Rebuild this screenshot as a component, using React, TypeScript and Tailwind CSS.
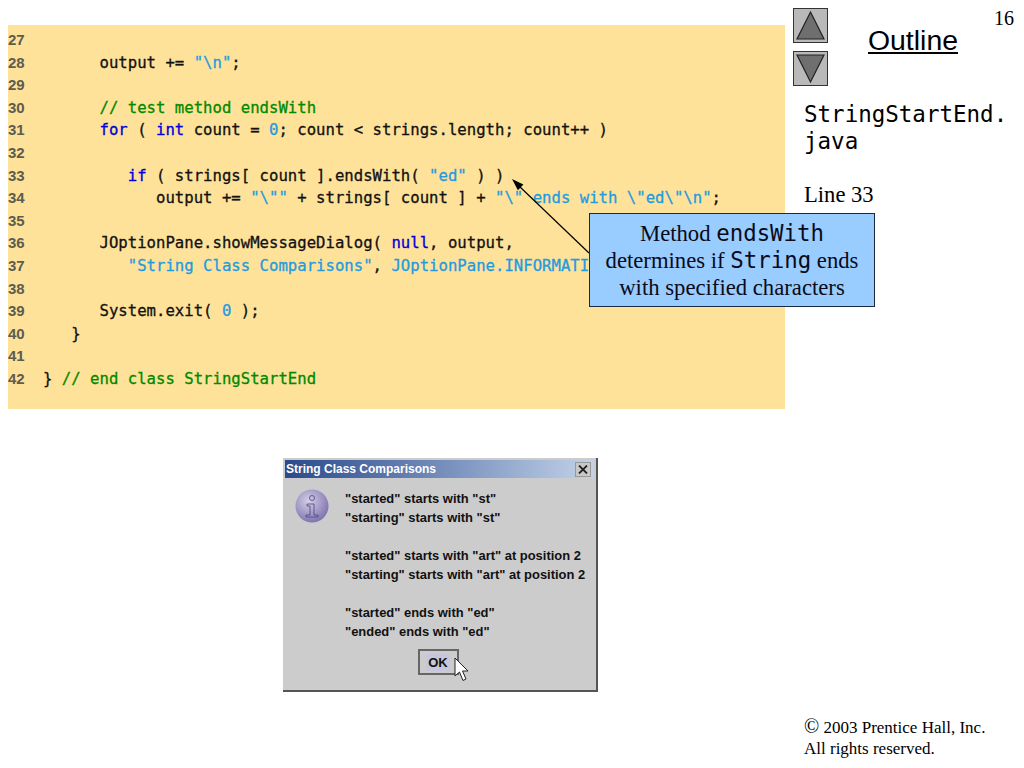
const sans = 'font-["Liberation_Sans",Arial,sans-serif]';

const Kw = ({ children }: { children: React.ReactNode }) => <span className="text-[#0000dd]">{children}</span>;
const Str = ({ children }: { children: React.ReactNode }) => <span className="text-[#1f9be0]">{children}</span>;
const Cm = ({ children }: { children: React.ReactNode }) => <span className="text-[#008a00]">{children}</span>;

const lines: [number, React.ReactNode][] = [
  [27, ''],
  [28, <>      output += <Str>"\n"</Str>;</>],
  [29, ''],
  [30, <>      <Cm>// test method endsWith</Cm></>],
  [31, <>      <Kw>for</Kw> ( <Kw>int</Kw> count = <Str>0</Str>; count &lt; strings.length; count++ )</>],
  [32, ''],
  [33, <>         <Kw>if</Kw> ( strings[ count ].endsWith( <Str>"ed"</Str> ) )</>],
  [34, <>            output += <Str>"\""</Str> + strings[ count ] + <Str>"\" ends with \"ed\"\n"</Str>;</>],
  [35, ''],
  [36, <>      JOptionPane.showMessageDialog( <Kw>null</Kw>, output,</>],
  [37, <>         <Str>"String Class Comparisons"</Str>, <Str>JOptionPane.INFORMATI</Str></>],
  [38, ''],
  [39, <>      System.exit( <Str>0</Str> );</>],
  [40, <>   {'}'}</>],
  [41, ''],
  [42, <>{'}'} <Cm>// end class StringStartEnd</Cm></>],
];

const message = [
  '"started" starts with "st"',
  '"starting" starts with "st"',
  '',
  '"started" starts with "art" at position 2',
  '"starting" starts with "art" at position 2',
  '',
  '"started" ends with "ed"',
  '"ended" ends with "ed"',
];

const NavButton = ({ up }: { up?: boolean }) => (
  <div className="w-[35px] h-[35px] bg-[#b9b9b9] border border-[#333] flex items-center justify-center">
    <svg width="29" height="31" viewBox="0 0 29 31">
      <polygon points={up ? '14.5,2 28,29 1,29' : '1,2 28,2 14.5,29'} fill="#6f6f6f" stroke="#222" strokeWidth="1.2" />
    </svg>
  </div>
);

export default function App() {
  return (
    <div className="relative w-[1024px] h-[768px] bg-white overflow-hidden flex">
      <div className="w-[793px] shrink-0 pl-2 pt-[25px] flex flex-col">
        <div className="w-[777px] h-[384px] bg-[#ffe299] pt-1 font-['DejaVu_Sans_Mono',monospace] text-[15.65px] text-[#111] [-webkit-text-stroke:0.3px]">
          {lines.map(([n, code]) => (
            <div key={n} className="flex h-[22.6px] leading-[22.6px]">
              <span className={`w-[35px] shrink-0 ${sans} font-bold text-[15px] text-[#5c5c50] [-webkit-text-stroke:0px]`}>{n}</span>
              <span className="whitespace-pre">{code}</span>
            </div>
          ))}
        </div>

        <div className="ml-[275px] mt-[49px] w-[315px] h-[234px] bg-[#cccccc] border-r-2 border-b-2 border-[#555] pt-0.5 flex flex-col">
          <div className={`h-[18px] mx-0.5 bg-gradient-to-r from-[#2b4a8c] to-[#c3d2e8] flex items-center justify-between pl-px pr-[3px] ${sans} font-bold text-xs text-white`}>
            String Class Comparisons
            <span className="w-4 h-[15px] bg-[#c8c8c8] border border-[#999] flex items-center justify-center">
              <svg width="10" height="9" viewBox="0 0 10 9">
                <path d="M1 0.5 L9 8.5 M9 0.5 L1 8.5" stroke="#222" strokeWidth="1.8" />
              </svg>
            </span>
          </div>
          <div className="flex pl-3 pt-[11px]">
            <svg width="34" height="34" viewBox="0 0 34 34" className="shrink-0">
              <defs>
                <radialGradient id="inf" cx="0.4" cy="0.35" r="0.75">
                  <stop offset="0" stopColor="#d5d0e6" />
                  <stop offset="1" stopColor="#7468a8" />
                </radialGradient>
              </defs>
              <circle cx="17" cy="17" r="16.5" fill="url(#inf)" />
              <circle cx="17" cy="9" r="2.5" fill="none" stroke="#4a4480" strokeWidth="0.8" />
              <path d="M12 15 H19 V26 H23 V28 H11 V26 H15 V17 H12 Z" fill="none" stroke="#4a4480" strokeWidth="0.8" />
            </svg>
            <div className={`ml-4 ${sans} font-bold text-[12.95px] text-[#111] whitespace-pre`}>
              {message.map((m, i) => (
                <div key={i} className="h-[19px] leading-[19px]">{m}</div>
              ))}
            </div>
          </div>
          <div className="flex justify-center pr-[3px] pt-2">
            <div className="w-[41px] h-[26px] border-2 border-[#666] flex items-center justify-center">
              <span className={`bg-[#c6c6dc] px-0.5 ${sans} font-bold text-[13px] leading-[17px] text-[#111]`}>OK</span>
            </div>
          </div>
        </div>
      </div>

      <div className="flex-1 flex flex-col">
        <div className="flex">
          <div className="flex flex-col gap-2 pt-2">
            <NavButton up />
            <NavButton />
          </div>
          <div className={`ml-10 mt-[23px] ${sans} text-[28.4px] leading-[34px] underline text-black`}>Outline</div>
          <div className="ml-9 mt-[7px] font-['Liberation_Serif',serif] text-xl leading-[23px] text-black">16</div>
        </div>
        <div className="ml-[11px] mt-[15px] font-['DejaVu_Sans_Mono',monospace] text-[22.5px] leading-[27px] text-black">
          StringStartEnd.
          <br />
          java
        </div>
        <div className="ml-[11px] mt-7 font-['Liberation_Serif',serif] text-[22.6px] leading-6 text-black">Line 33</div>
        <div className="ml-[11px] mt-auto mb-[9px] font-['Liberation_Serif',serif] text-[17px] leading-[21px] text-black">
          <span className="text-xl leading-none">©</span> 2003 Prentice Hall, Inc.
          <br />
          All rights reserved.
        </div>
      </div>

      <svg className="absolute left-[505px] top-[172px]" width="90" height="90" viewBox="505 172 90 90">
        <path d="M589 253 L519 186" stroke="#000" strokeWidth="1.2" fill="none" />
        <polygon points="512,179 523.4,184.4 517.9,190.2" fill="#000" />
      </svg>

      <div className="absolute left-[589px] top-[213px] w-[286px] h-[94px] bg-[#99ccff] border border-[#1a2a40] flex flex-col items-center justify-center font-['Liberation_Serif',serif] text-[22.7px] leading-[27px] text-[#0a0a1a]">
        <div>Method <span className="font-['DejaVu_Sans_Mono',monospace] text-[22.4px]">endsWith</span></div>
        <div>determines if <span className="font-['DejaVu_Sans_Mono',monospace] text-[22.4px]">String</span> ends</div>
        <div>with specified characters</div>
      </div>

      <svg className="absolute left-[454px] top-[657px]" width="16" height="25" viewBox="0 0 16 25">
        <path d="M1 1 V19 L5.5 15 L9 23.5 L12 22 L8.5 14 H14 Z" fill="#fff" stroke="#222" strokeWidth="1" />
      </svg>
    </div>
  );
}
